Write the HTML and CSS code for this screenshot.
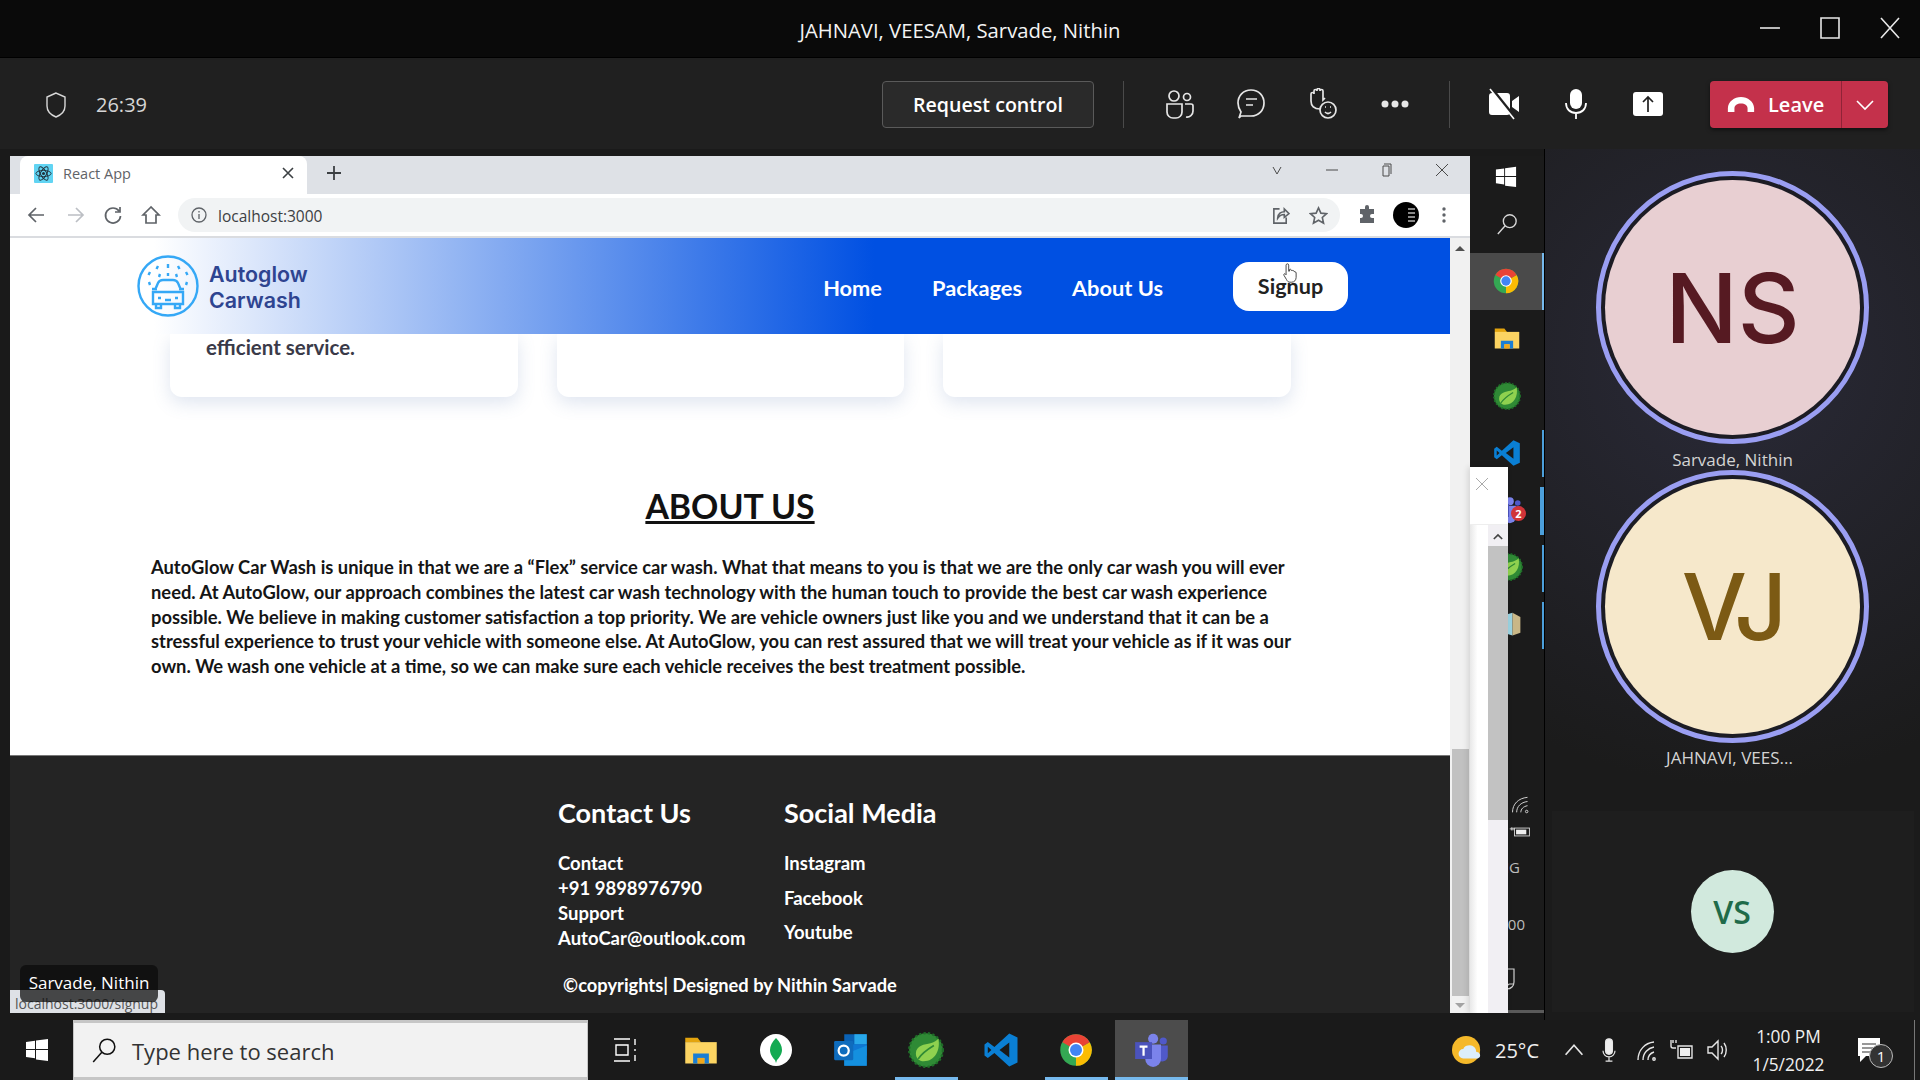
FILE: index.html
```html
<!DOCTYPE html>
<html lang="en">
<head>
<meta charset="utf-8">
<title>React App</title>
<link rel="stylesheet" href="styles.css">
</head>
<body>
<svg class="defs" width="0" height="0" aria-hidden="true">
  <defs>
    <symbol id="i-chrome" viewBox="0 0 48 48">
      <circle cx="24" cy="24" r="21" fill="#34a853"/>
      <path fill="#fbbc04" d="M24 24 42.2 13.5A21 21 0 0 1 24 45Z"/>
      <path fill="#ea4335" d="M24 24 5.8 13.5A21 21 0 0 1 42.2 13.5Z"/>
      <circle cx="24" cy="24" r="10" fill="#fff"/>
      <circle cx="24" cy="24" r="8" fill="#4285f4"/>
    </symbol>
    <symbol id="i-folder" viewBox="0 0 32 32">
      <path fill="#e3a40e" d="M2 5h11l3 4H2z"/>
      <path fill="#fcd462" d="M2 9h28v19H2z"/>
      <path fill="#1a7ed4" d="M9 28v-9h14v9h-4v-5h-6v5z"/>
      <path fill="#f0a81c" d="M13 23h6v5h-6z"/>
    </symbol>
    <symbol id="i-spring" viewBox="0 0 32 32">
      <circle cx="16" cy="16" r="15" fill="#2f8a35"/>
      <circle cx="16" cy="16" r="15" fill="none" stroke="#1f6d28" stroke-width="2" stroke-dasharray="2 2"/>
      <path fill="#8fd14f" d="M27 6c2 10-3 20-13 20-4 0-7-3-7-7 0-7 8-8 13-9 3-1 5-2 7-4z"/>
      <path fill="none" stroke="#2f8a35" stroke-width="1.5" d="M9 24c4-6 9-9 14-12"/>
    </symbol>
    <symbol id="i-vscode" viewBox="0 0 24 24">
      <path fill="#0a7fd4" d="M17.5 1 23 3.6v16.8L17.5 23 7.6 14 3.2 17.3 1 15.6V8.4l2.2-1.7L7.6 10z"/>
      <path fill="#1a1a1a" d="M17.5 7 11 12l6.5 5zM3.2 9.8v4.4L5.6 12z"/>
    </symbol>
    <symbol id="i-teams" viewBox="0 0 32 32">
      <circle cx="17" cy="6" r="4.5" fill="#7b83eb"/>
      <circle cx="26" cy="8" r="3.2" fill="#5059c9"/>
      <path fill="#5059c9" d="M21 12h9v10a5 5 0 0 1-9 2z"/>
      <path fill="#7b83eb" d="M10 11h14v13a7 7 0 0 1-14 0z"/>
      <path fill="#4b53bc" d="M1 9h15v15H1z"/>
      <path fill="#fff" d="M5 12h7v2H9.5v7h-2v-7H5z"/>
    </symbol>
    <symbol id="i-box" viewBox="0 0 32 32">
      <path fill="#9bd2e0" d="M3 8 20 3v26L3 24z"/>
      <path fill="#c9b787" d="M20 3l9 5v18l-9 3z"/>
    </symbol>
  </defs>
</svg>

<div class="app">
  <header class="titlebar">
    <span class="title">JAHNAVI, VEESAM, Sarvade, Nithin</span>
    <div class="wincontrols">
      <svg class="wc" viewBox="0 0 24 24"><path d="M2 12h20" /></svg>
      <svg class="wc" viewBox="0 0 24 24"><path d="M3 2h18v20H3z"/></svg>
      <svg class="wc" viewBox="0 0 24 24"><path d="M3 2l18 20M21 2 3 22"/></svg>
    </div>
  </header>

  <section class="meetbar">
    <svg class="shield" viewBox="0 0 24 28"><path d="M12 2 3 6v9c0 5 4 9 9 11 5-2 9-6 9-11V6z"/></svg>
    <span class="timer">26:39</span>
    <button class="reqbtn">Request control</button>
    <span class="vsep first"></span>
    <div class="slots first">
      <svg class="ico" viewBox="0 0 32 32"><circle cx="11" cy="8" r="5"/><circle cx="24" cy="9" r="3.5"/><path d="M4 16h15v8a6 6 0 0 1-6 6h-3a6 6 0 0 1-6-6zM22 16h6a2 2 0 0 1 2 2v5a6 6 0 0 1-7 6"/></svg>
      <svg class="ico" viewBox="0 0 32 32"><path d="M16 2c8 0 13 6 13 13s-5 13-13 13H6l-2 2 2-6c-2-3-3-6-3-9C3 8 8 2 16 2z"/><path d="M11 11h11M11 17h7"/></svg>
      <svg class="ico" viewBox="0 0 32 32"><path d="M13 21c-6 0-9-3-9-8V6c0-2 3-2 3 0V3c0-2 3-2 3 0V2c0-2 3-2 3 0v1c0-2 3-2 3 0v9l2-2"/><circle cx="21" cy="22" r="8"/><path d="M18 24c2 2 4 2 6 0"/><path d="M18 19h1M23 19h1"/></svg>
      <svg class="ico dots" viewBox="0 0 32 32"><circle cx="6" cy="16" r="3.5"/><circle cx="16" cy="16" r="3.5"/><circle cx="26" cy="16" r="3.5"/></svg>
    </div>
    <span class="vsep"></span>
    <div class="slots second">
      <svg class="ico solid" viewBox="0 0 32 32"><path d="M1 8a3 3 0 0 1 3-3h15a3 3 0 0 1 3 3v16a3 3 0 0 1-3 3H4a3 3 0 0 1-3-3zM24 13l7-5v16l-7-5z"/><path class="cut" d="M4 1l24 30"/><path class="slash" d="M2 1l24 30"/></svg>
      <svg class="ico solid" viewBox="0 0 32 32"><rect x="10" y="1" width="12" height="20" rx="6"/><path class="line" d="M6 15c0 6 4 10 10 10s10-4 10-10M16 25v6"/></svg>
      <svg class="ico solid" viewBox="0 0 32 32"><rect x="1" y="4" width="30" height="24" rx="3"/><path class="cutthin" d="M16 24V10M11 14l5-5 5 5"/></svg>
    </div>
    <div class="leave">
      <span class="leave-main">
        <svg class="hang" viewBox="0 0 32 20"><path d="M2 18v-4C2 7 9 2 16 2s14 5 14 12v4h-7v-4c0-3-3-5-7-5s-7 2-7 5v4z"/></svg>
        Leave
      </span>
      <span class="leave-more"><svg class="chev" viewBox="0 0 20 12"><path d="M2 2l8 8 8-8"/></svg></span>
    </div>
  </section>

  <main class="stage">
    <div class="screen">
      <div class="chrome">
        <div class="tabstrip">
          <div class="tab">
            <svg class="favicon" viewBox="0 0 20 20"><rect width="20" height="20" rx="1" fill="#61d4f3"/><g fill="none" stroke="#22323c" stroke-width="1"><ellipse cx="10" cy="10" rx="8" ry="3.2"/><ellipse cx="10" cy="10" rx="8" ry="3.2" transform="rotate(60 10 10)"/><ellipse cx="10" cy="10" rx="8" ry="3.2" transform="rotate(120 10 10)"/></g><circle cx="10" cy="10" r="1.6" fill="#22323c"/></svg>
            <span class="tabname">React App</span>
            <svg class="tabx" viewBox="0 0 12 12"><path d="M1 1l10 10M11 1 1 11"/></svg>
          </div>
          <svg class="newtab" viewBox="0 0 16 16"><path d="M8 1v14M1 8h14"/></svg>
          <div class="cwin">
            <svg class="cw" viewBox="0 0 14 14"><path d="M3 4l4 7 4-7"/></svg>
            <svg class="cw" viewBox="0 0 14 14"><path d="M1 7h12"/></svg>
            <svg class="cw" viewBox="0 0 14 14"><path d="M4 1h7v10M3 3h6v10H3z"/></svg>
            <svg class="cw" viewBox="0 0 14 14"><path d="M1 1l12 12M13 1 1 13"/></svg>
          </div>
        </div>
        <div class="toolbar">
          <svg class="tb" viewBox="0 0 20 20"><path d="M17 10H3M9 3l-7 7 7 7"/></svg>
          <svg class="tb dim" viewBox="0 0 20 20"><path d="M3 10h14M11 3l7 7-7 7"/></svg>
          <svg class="tb" viewBox="0 0 20 20"><path d="M16 6a7.5 7.5 0 1 0 1.5 5M17 2v5h-5"/></svg>
          <svg class="tb" viewBox="0 0 20 20"><path d="M10 2 2 10h3v8h10v-8h3z"/></svg>
          <div class="omni">
            <svg class="info" viewBox="0 0 16 16"><circle cx="8" cy="8" r="7"/><path d="M8 7v5M8 4v1.5"/></svg>
            <span class="url">localhost:3000</span>
            <svg class="tb share" viewBox="0 0 20 20"><path d="M9 3H3v15h13v-6M7 13c0-5 4-7 7-7V3l5 5-5 4V9c-3 0-5 1-7 4z"/></svg>
            <svg class="tb star" viewBox="0 0 20 20"><path d="M10 2l2.5 5.5 6 .6-4.5 4 1.3 6L10 15l-5.300 3.100 1.300-6-4.500-4 6-.6z"/></svg>
          </div>
          <svg class="puzzle" viewBox="0 0 20 20"><path d="M8 2a2 2 0 0 1 4 0v2h5v5h-2a2 2 0 0 0 0 4h2v5H3v-5h1a2 2 0 0 0 0-4H3V4h5z"/></svg>
          <span class="avatar-sm"><span class="avatar-sm-mark"></span></span>
          <svg class="kebab" viewBox="0 0 4 18"><circle cx="2" cy="3" r="1.700"/><circle cx="2" cy="9" r="1.700"/><circle cx="2" cy="15" r="1.700"/></svg>
        </div>
        <div class="viewport">
          <div class="page">
            <nav class="nav">
              <div class="brand">
                <svg class="brandicon" viewBox="0 0 64 64">
                  <circle cx="32" cy="32" r="29.500"/>
                  <path d="M22 12l-1.500 3M32 10v4M42 12l1.500 3M14 18l-1.500 3M50 18l1.500 3M24 20l-1 3M32 19v3M40 20l1 3M13 28l1 3M51 28l-1 3"/>
                  <path d="M19 36l3-7c1-2 3-3 5-3h10c2 0 4 1 5 3l3 7M16 35h5M43 35h5M17 38h30v12H17zM20 50v4h5v-4M39 50v4h5v-4M22 44h3M39 44h3M29 46h6"/>
                </svg>
                <span class="brandname">Autoglow<br>Carwash</span>
              </div>
              <ul class="links">
                <li><a class="link">Home</a></li>
                <li><a class="link">Packages</a></li>
                <li><a class="link">About Us</a></li>
              </ul>
              <a class="signup">Signup</a>
              <svg class="handcursor" viewBox="0 0 16 24"><path d="M5 1.500c1 0 1.500.7 1.500 1.500v7l1-.2V8c1-.6 2 0 2 1l1 .2c1-.5 2 0 2 1l1 .3c1 0 1.500.7 1.500 1.500v5c0 3-2 5.500-5 5.500H8c-2 0-3-1-4-3l-3-5c-.5-1 .5-2 1.500-1.500l1 1V3c0-.8.7-1.500 1.500-1.500z"/></svg>
            </nav>
            <div class="cards">
              <div class="card"><p class="cardtext">efficient service.</p></div>
              <div class="card"></div>
              <div class="card"></div>
            </div>
            <section class="about">
              <h1 class="about-title">ABOUT US</h1>
              <p class="about-text">AutoGlow Car Wash is unique in that we are a “Flex” service car wash. What that means to you is that we are the only car wash you will ever<br>need. At AutoGlow, our approach combines the latest car wash technology with the human touch to provide the best car wash experience<br>possible. We believe in making customer satisfaction a top priority. We are vehicle owners just like you and we understand that it can be a<br>stressful experience to trust your vehicle with someone else. At AutoGlow, you can rest assured that we will treat your vehicle as if it was our<br>own. We wash one vehicle at a time, so we can make sure each vehicle receives the best treatment possible.</p>
            </section>
            <footer class="footer">
              <div class="footcols">
                <div class="footcol">
                  <h2 class="foothead">Contact Us</h2>
                  <p class="contact">Contact<br>+91 9898976790<br>Support<br>AutoCar@outlook.com</p>
                </div>
                <div class="footcol">
                  <h2 class="foothead">Social Media</h2>
                  <ul class="social">
                    <li>Instagram</li>
                    <li>Facebook</li>
                    <li>Youtube</li>
                  </ul>
                </div>
              </div>
              <p class="copy">©copyrights| Designed by Nithin Sarvade</p>
            </footer>
          </div>
          <div class="scroll">
            <span class="arrow up"></span>
            <span class="thumb"></span>
            <span class="arrow down"></span>
          </div>
        </div>
      </div>
      <aside class="sidebar">
        <svg class="winlogo side" viewBox="0 0 24 24"><path d="M1 4l9-1.300V11H1zM11 2.500 23 1v10H11zM1 12h9v8.300L1 19zM11 12h12v11l-12-1.500z"/></svg>
        <svg class="sidesearch" viewBox="0 0 24 24"><circle cx="15" cy="9" r="7"/><path d="M10 14 2 23"/></svg>
        <div class="tile active"><svg class="sideicon"><use href="#i-chrome"/></svg></div>
        <div class="tile"><svg class="sideicon"><use href="#i-folder"/></svg></div>
        <div class="tile"><svg class="sideicon"><use href="#i-spring"/></svg></div>
        <div class="tile mark"><svg class="sideicon"><use href="#i-vscode"/></svg></div>
        <div class="tile mark wide shifted"><svg class="sideicon"><use href="#i-teams"/></svg><span class="badge">2</span></div>
        <div class="tile mark shifted"><svg class="sideicon"><use href="#i-spring"/></svg></div>
        <div class="tile mark shifted"><svg class="sideicon"><use href="#i-box"/></svg></div>
        <div class="sidetray">
          <svg class="st wifi" viewBox="0 0 24 24"><path d="M3 22C3 12 10 5 21 4M8 22c0-7 5-12 13-13M13 22c0-4 3-7 8-8"/><circle cx="20" cy="21" r="1.500"/></svg>
          <svg class="st batt" viewBox="0 0 28 14"><rect x="7" y="2" width="19" height="10"/><rect class="fill" x="9" y="4" width="13" height="6"/><path d="M1 3h6M3 1v4M5 1v4"/></svg>
          <span class="sttext g">NG</span>
          <span class="sttext o">00</span>
          <svg class="st note" viewBox="0 0 24 24"><path d="M2 2h14v13c0 4-3 7-7 7H2M9 22c0-3 1-5 3-5h4"/></svg>
          <span class="sideline"></span>
        </div>
      </aside>
    </div>

    <aside class="people">
      <div class="ring"><div class="disc ns">NS</div></div>
      <p class="pname">Sarvade, Nithin</p>
      <div class="ring"><div class="disc vj">VJ</div></div>
      <p class="pname trunc">JAHNAVI, VEES...</p>
      <div class="vsbox"><div class="vsdisc">VS</div></div>
    </aside>

    <div class="popup">
      <div class="popup-top"><svg class="popup-x" viewBox="0 0 14 14"><path d="M1 1l12 12M13 1 1 13"/></svg></div>
      <div class="popup-body">
        <div class="popup-bar">
          <svg class="popup-up" viewBox="0 0 12 8"><path d="M1 7l5-5 5 5"/></svg>
          <span class="popup-thumb"></span>
        </div>
      </div>
    </div>

    <div class="namelabel">Sarvade, Nithin</div>
    <div class="status">localhost:3000/signup</div>
  </main>

  <footer class="taskbar">
    <div class="startbtn"><svg class="winlogo" viewBox="0 0 24 24"><path d="M1 4l9-1.300V11H1zM11 2.500 23 1v10H11zM1 12h9v8.300L1 19zM11 12h12v11l-12-1.500z"/></svg></div>
    <div class="searchbox">
      <svg class="searchglass" viewBox="0 0 24 24"><circle cx="15" cy="9" r="7"/><path d="M10 14 2 23"/></svg>
      <span class="searchtext">Type here to search</span>
    </div>
    <div class="tk"><svg class="taskview" viewBox="0 0 26 26"><path d="M1 2h16M1 24h16M3 8h12v10H3zM22 2v6M22 12v2M22 18v6"/></svg></div>
    <div class="tk"><svg class="tkicon"><use href="#i-folder"/></svg></div>
    <div class="tk"><svg class="mongo" viewBox="0 0 32 32"><circle cx="16" cy="16" r="16" fill="#fff"/><path fill="#13aa52" d="M16 4c4 4 6 8 6 12s-3 8-5 10l-1 3-1-3c-2-2-5-6-5-10s2-8 6-12z"/></svg></div>
    <div class="tk"><svg class="tkicon" viewBox="0 0 32 32"><path fill="#0a62b5" d="M10 2h20v28H10z"/><path fill="#28a8ea" d="M19 2h11v9H19z"/><path fill="#0f78d4" d="M10 11h20v10H10z"/><path fill="#1490df" d="M10 20l20-8v18H10z"/><rect x="1" y="8" width="17" height="17" rx="1" fill="#0f6cbd"/><circle cx="9.500" cy="16.500" r="4.500" fill="none" stroke="#fff" stroke-width="2"/></svg></div>
    <div class="tk under"><svg class="tkicon"><use href="#i-spring"/></svg></div>
    <div class="tk"><svg class="tkicon"><use href="#i-vscode"/></svg></div>
    <div class="tk under"><svg class="tkicon"><use href="#i-chrome"/></svg></div>
    <div class="tk current"><svg class="tkicon teamsicon"><use href="#i-teams"/></svg></div>

    <div class="tray">
      <svg class="weather" viewBox="0 0 32 32"><circle cx="15" cy="16" r="15" fill="#f5b92a"/><path fill="#dceffb" d="M12 25a5 5 0 0 1 0-10c1-3 4-4 7-4a7 7 0 0 1 7 7c3 0 4 2 4 4s-2 3-4 3z"/></svg>
      <span class="temp">25°C</span>
      <div class="ts"><svg class="tsi" viewBox="0 0 20 20"><path d="M3 14l7-8 7 8"/></svg></div>
      <div class="ts"><svg class="tsi mic" viewBox="0 0 20 28"><rect x="6" y="1" width="8" height="18" rx="4"/><path class="thin" d="M3 15c0 4 3 7 7 7s7-3 7-7M10 22v5M6 27h8"/></svg></div>
      <div class="ts gapped"><svg class="tsi" viewBox="0 0 24 24"><path d="M3 22C3 12 10 5 19 4M8 22c0-7 5-12 11-13M13 22c0-4 3-7 6-8"/><circle cx="19" cy="21" r="1.200"/></svg></div>
      <div class="ts"><svg class="tsi" viewBox="0 0 24 24"><path d="M8 8h14v12H8zM1 2v6a2 2 0 0 0 2 2h3M3 2v3M6 2v3"/><path class="bfill" d="M10 10h10v8H10z"/></svg></div>
      <div class="ts"><svg class="tsi" viewBox="0 0 24 24"><path d="M3 9v6h4l6 6V3L7 9zM16 8c2 2 2 6 0 8M19 5c3 4 3 10 0 14"/></svg></div>
      <div class="clock"><span>1:00 PM</span><span>1/5/2022</span></div>
      <div class="notif">
        <svg class="notifi" viewBox="0 0 24 28"><path d="M1 2h22v18H9l-6 6v-6H1z"/><path class="nl" d="M5 8h14M5 12h14M5 16h10"/></svg>
        <span class="notifn">1</span>
      </div>
      <span class="peek"></span>
    </div>
  </footer>
</div>
</body>
</html>
```

FILE: styles.css
```css
* { box-sizing: border-box; }
html, body { margin: 0; padding: 0; }
body { width: 1920px; height: 1080px; overflow: hidden; background: #141414; font-family: "Open Sans", "Noto Sans", sans-serif; color: #fff; }
p, h1, h2, ul { margin: 0; padding: 0; }
ul { list-style: none; }
.defs { position: absolute; }
.app { width: 1920px; height: 1080px; display: flex; flex-direction: column; }

/* title bar */
.titlebar { height: 58px; background: #0a0a0a; display: flex; align-items: center; justify-content: center; position: relative; border-bottom: 1px solid #000; }
.title { font-size: 20.3px; color: #f4f4f4; margin-top: 2px; }
.wincontrols { position: absolute; right: 18px; top: 16px; display: flex; gap: 36px; }
.wc { width: 24px; height: 24px; fill: none; stroke: #e8e8e8; stroke-width: 1.6; }

/* meeting bar */
.meetbar { height: 91px; background: #202020; display: flex; align-items: center; padding: 2px 32px 0 44px; }
.shield { width: 24px; height: 30px; fill: none; stroke: #d8d8d8; stroke-width: 1.4; }
.timer { font-size: 20px; color: #d6d6d6; margin-left: 28px; width: 50px; white-space: nowrap; }
.reqbtn { margin-left: 736px; width: 212px; height: 47px; background: #2a2a2a; border: 1px solid #5a5a5a; border-radius: 4px; color: #fff; font: 600 19.6px "Open Sans", sans-serif; padding: 0; }
.vsep { width: 1px; height: 47px; background: #4a4a4a; margin-left: 18px; }
.vsep.first { margin-left: 29px; }
.slots { display: flex; }
.slots.first { margin-left: 19px; }
.slots.second { margin-left: 18px; }
.ico { width: 32px; height: 32px; margin: -2px 20px 0; fill: none; stroke: #e6e6e6; stroke-width: 1.7; }
.ico.dots { fill: #e6e6e6; stroke: none; }
.ico.solid { fill: #fff; stroke: none; }
.ico .cut { stroke: #202020; stroke-width: 3; }
.ico .slash { stroke: #fff; stroke-width: 1.6; fill: none; }
.ico .line { fill: none; stroke: #fff; stroke-width: 1.8; }
.ico .cutthin { fill: none; stroke: #202020; stroke-width: 1.7; }
.leave { margin-left: 26px; width: 178px; height: 47px; background: #c4314b; border-radius: 4px; display: flex; box-shadow: 0 2px 4px rgba(0,0,0,.5); }
.leave-main { width: 131px; display: flex; align-items: center; gap: 12px; padding-left: 16px; font-size: 20px; font-weight: 600; }
.hang { width: 30px; height: 19px; fill: #fff; }
.leave-more { width: 47px; border-left: 1px solid #8f2337; display: flex; align-items: center; justify-content: center; }
.chev { width: 20px; height: 12px; fill: none; stroke: #fff; stroke-width: 1.6; }

/* stage */
.stage { position: relative; height: 871px; display: flex; background: #141414; }
.screen { width: 1544px; display: flex; padding: 7px 0 7px 10px; background: #1a1a1a; }
.chrome { width: 1460px; height: 857px; display: flex; flex-direction: column; background: #fff; }
.tabstrip { height: 38px; background: #dee1e6; display: flex; align-items: flex-end; padding-left: 10px; }
.tab { width: 287px; height: 38px; background: #fff; border-radius: 8px 8px 0 0; display: flex; align-items: center; padding: 0 13px 4px 14px; }
.favicon { width: 19px; height: 19px; }
.tabname { margin-left: 10px; font-size: 14.5px; color: #5f6368; flex: 1; font-family: "Open Sans", sans-serif; }
.tabx { width: 12px; height: 12px; stroke: #3c4043; stroke-width: 1.6; }
.newtab { width: 16px; height: 16px; stroke: #3c4043; stroke-width: 1.8; margin: 0 0 13px 19px; }
.cwin { margin-left: auto; display: flex; gap: 41px; align-self: flex-start; padding: 7px 21px 0 0; }
.cw { width: 14px; height: 14px; fill: none; stroke: #4a4a4a; stroke-width: 1; }
.toolbar { height: 44px; background: #fff; border-bottom: 2px solid #dadce0; display: flex; align-items: center; padding: 0 0 0 17px; }
.tb { width: 20px; height: 20px; fill: none; stroke: #5f6368; stroke-width: 1.7; margin-right: 18px; }
.tb.dim { stroke: #bcbfc4; }
.omni { width: 1162px; height: 34px; margin-left: -1px; background: #f1f3f4; border-radius: 17px; display: flex; align-items: center; padding-left: 13px; }
.info { width: 16px; height: 16px; fill: none; stroke: #5f6368; stroke-width: 1.3; }
.url { font-size: 15.5px; color: #3c4043; margin: 1px 0 0 11px; flex: 1; }
.tb.share { width: 19px; height: 19px; margin-right: 19px; }
.tb.star { width: 19px; height: 19px; margin-right: 12px; }
.puzzle { width: 20px; height: 20px; fill: #5f6368; margin-left: 17px; }
.avatar-sm { width: 26px; height: 26px; border-radius: 50%; background: #000; margin-left: 16px; display: flex; align-items: center; justify-content: flex-end; padding-right: 4px; }
.avatar-sm-mark { width: 7px; height: 14px; background: repeating-linear-gradient(0deg, #888 0 2px, #000 2px 4px); }
.kebab { width: 4px; height: 18px; fill: #5f6368; margin-left: 23px; }

/* page */
.viewport { height: 775px; display: flex; }
.page { width: 1440px; display: flex; flex-direction: column; background: #fff; font-family: "Lato", "Noto Sans", sans-serif; }
.nav { height: 96px; position: relative; display: flex; align-items: center; background: linear-gradient(to right, #fff 10%, #0050e2 60%); padding-left: 126px; flex: none; }
.brand { display: flex; align-items: center; gap: 9px; }
.brandicon { width: 64px; height: 64px; fill: none; stroke: #35a8f6; stroke-width: 2.4; }
.brandname { font-family: "Inter", "Noto Sans", sans-serif; font-size: 21.4px; font-weight: 600; line-height: 26px; color: #2e4490; margin-top: 2px; }
.links { display: flex; gap: 50px; margin: 2px 0 0 auto; }
.link { font-size: 21.8px; font-weight: 700; color: #fff; }
.signup { margin: 0 102px 0 70px; width: 115px; height: 49px; background: #fff; border-radius: 16px; display: flex; align-items: center; justify-content: center; font-size: 21.6px; font-weight: 700; color: #222; }
.handcursor { position: absolute; left: 1273px; top: 24px; width: 14px; height: 22px; fill: #fff; stroke: #333; stroke-width: 1; }

.cards { height: 63px; display: flex; gap: 39px; padding-left: 160px; flex: none; }
.card { width: 347.5px; height: 63px; background: #fff; border-radius: 0 0 12px 12px; box-shadow: 0 6px 18px rgba(80,110,170,.18); }
.cardtext { padding-left: 36px; font-size: 20.5px; font-weight: 700; line-height: 26px; color: #3a3a48; }

.about { flex: 1; }
.about-title { margin-top: 87px; text-align: center; font-size: 33.8px; font-weight: 700; line-height: 44px; color: #111; text-decoration: underline; }
.about-text { margin-top: 27px; padding-left: 141px; font-size: 18.35px; font-weight: 700; line-height: 24.8px; color: #151515; white-space: nowrap; }

.footer { height: 258px; flex: none; background: #242424; border-top: 1px solid #777; padding-top: 39px; }
.footcols { display: flex; padding-left: 548px; }
.footcol { width: 226px; }
.foothead { font-size: 27px; font-weight: 700; line-height: 36px; color: #fff; }
.contact { margin-top: 20px; font-size: 18.5px; font-weight: 700; line-height: 25px; color: #fff; white-space: nowrap; }
.social { margin-top: 20px; font-size: 18.5px; font-weight: 700; line-height: 25px; display: flex; flex-direction: column; gap: 9.5px; }
.copy { margin-top: 21px; text-align: center; font-size: 18.3px; font-weight: 700; line-height: 26px; color: #fff; }

.scroll { width: 20px; background: #f1f1f1; position: relative; display: flex; flex-direction: column; align-items: center; }
.arrow { width: 0; height: 0; border-left: 5px solid transparent; border-right: 5px solid transparent; }
.arrow.up { border-bottom: 5px solid #505050; margin-top: 8px; }
.arrow.down { border-top: 5px solid #a3a3a3; margin-top: 7px; }
.thumb { width: 17px; height: 247px; background: #c1c1c1; margin-top: 498px; }

/* taskbar-like sidebar inside shared screen */
.sidebar { width: 74px; display: flex; flex-direction: column; align-items: stretch; background: #1b1b1b; }
.winlogo { width: 24px; height: 24px; fill: #fff; }
.winlogo.side { margin: 9px 0 7px 25px; width: 22px; height: 24px; }
.sidesearch { width: 22px; height: 28px; margin: 14px 0 15px 26px; fill: none; stroke: #d8d8d8; stroke-width: 1.5; }
.tile { height: 57.200px; display: flex; align-items: center; justify-content: center; position: relative; flex: none; }
.tile.active { background: #4a4a4a; border-right: 2px solid #76b9ed; }
.tile.mark::after { content: ""; position: absolute; right: 0; top: 6px; bottom: 4px; width: 2px; background: #4c9fdb; }
.tile.wide::after { width: 4px; }
.tile.shifted { justify-content: flex-start; padding-left: 25px; }
.sideicon { width: 28px; height: 28px; }
.badge { position: absolute; left: 41px; top: 25px; width: 15px; height: 15px; border-radius: 50%; background: #d13438; font-size: 11px; font-weight: 700; text-align: center; line-height: 15px; }
.sidetray { margin-top: 137px; display: flex; flex-direction: column; flex: 1; }
.st { fill: none; stroke: #cfcfcf; stroke-width: 1.2; flex: none; }
.st.wifi { width: 20px; height: 20px; margin: 4px 0 5px 40px; }
.st.batt { width: 22px; height: 14px; margin: 6px 0 5px 39px; }
.st .fill { fill: #eee; stroke: none; }
.sttext { font-size: 15px; color: #bdbdbd; text-align: right; padding-right: 22px; height: 25px; line-height: 25px; flex: none; }
.sttext.g { margin-top: 11px; padding-right: 24px; }
.sttext.o { margin-top: 32px; padding-right: 19px; }
.st.note { width: 24px; height: 24px; margin: 30px 0 0 28px; }
.sideline { margin-top: 19px; height: 3px; background: #5a5a5a; }

/* participants */
.people { width: 376px; background: #1b1b1b radial-gradient(circle at 50% 24%, #2a2a38 0%, #1b1b1b 62%); border-left: 1px solid #000; display: flex; flex-direction: column; align-items: center; padding-top: 22px; }
.ring { width: 273px; height: 273px; border-radius: 50%; border: 5px solid #9a9ef2; background: #1c1c24; padding: 4px; flex: none; }
.disc { width: 100%; height: 100%; border-radius: 50%; display: flex; align-items: center; justify-content: center; font-family: "Inter", "Open Sans", sans-serif; font-size: 96px; font-weight: 500; letter-spacing: 0; }
.disc.ns { background: #e8cfd2; color: #561a22; }
.disc.vj { background: #f6e8cb; color: #7c5a14; font-size: 92px; letter-spacing: -4px; }
.pname { margin-top: 4px; height: 22px; font-size: 17px; line-height: 24px; color: #d4d4d4; flex: none; }
.pname.trunc { margin: 3px 6px 0 0; }
.vsbox { margin-top: 43px; width: 362px; height: 201px; background: #1e1e1e; display: flex; align-items: center; justify-content: center; flex: none; }
.vsdisc { width: 83px; height: 83px; margin-right: 1px; border-radius: 50%; background: #d1e9dd; color: #1f6b4a; font-size: 32px; font-weight: 600; display: flex; align-items: center; justify-content: center; }

/* overlays */
.popup { position: absolute; left: 1470px; top: 318px; width: 38px; height: 546px; background: #fff; display: flex; flex-direction: column; box-shadow: -2px 0 6px rgba(0,0,0,.12); }
.popup-top { height: 58px; border-bottom: 1px solid #eee; padding: 10px 0 0 5px; }
.popup-x { width: 14px; height: 14px; fill: none; stroke: #aaa; stroke-width: 1; display: block; }
.popup-body { flex: 1; display: flex; justify-content: flex-end; background: linear-gradient(to right, #e8e8e8, #fff 20%); }
.popup-bar { width: 20px; background: #f1eff3; display: flex; flex-direction: column; align-items: center; }
.popup-up { width: 10px; height: 7px; fill: none; stroke: #444; stroke-width: 2; margin: 8px 0 6px; }
.popup-thumb { width: 20px; height: 274px; background: #c2c2c2; }
.namelabel { position: absolute; left: 20px; top: 816px; width: 138px; height: 37px; background: rgba(10,10,10,.72); border-radius: 6px; font-size: 17px; line-height: 36px; text-align: center; color: #fff; z-index: 2; }
.status { position: absolute; left: 10px; top: 841px; width: 155px; height: 23px; background: #dee1e6; border-radius: 0 4px 0 0; font-size: 14px; line-height: 27px; color: #555; padding-left: 5px; white-space: nowrap; overflow: hidden; }

/* windows taskbar */
.taskbar { height: 60px; background: #1a1a1a; display: flex; align-items: stretch; }
.startbtn { width: 73px; display: flex; align-items: center; justify-content: center; }
.searchbox { width: 515px; background: #f2f2f2; border-top: 3px solid #c6c6c6; border-bottom: 3px solid #c6c6c6; border-left: 1px solid #c6c6c6; border-right: 1px solid #c6c6c6; display: flex; align-items: center; padding-left: 17px; }
.searchglass { width: 26px; height: 26px; fill: none; stroke: #111; stroke-width: 1.4; }
.searchtext { margin: 2px 0 0 15px; font-size: 22px; color: #333; }
.tk { width: 75px; display: flex; align-items: center; justify-content: center; position: relative; }
.tk.under::after { content: ""; position: absolute; left: 7px; right: 5px; bottom: 0; height: 3px; background: #76b9ed; }
.tk.current { background: #4c4c4c; border-bottom: 3px solid #76b9ed; margin-left: 2px; width: 73px; }
.tkicon { width: 36px; height: 36px; }
.teamsicon { margin-top: 3px; }
.mongo { width: 32px; height: 32px; }
.taskview { width: 26px; height: 26px; fill: none; stroke: #fff; stroke-width: 1.4; }
.tray { margin-left: auto; width: 475px; display: flex; align-items: center; position: relative; padding-left: 7px; }
.weather { width: 30px; height: 34px; flex: none; }
.temp { font-size: 20px; margin-left: 13px; width: 61px; color: #f0f0f0; flex: none; }
.ts { width: 35px; display: flex; justify-content: center; flex: none; }
.ts.gapped { margin-left: 3px; }
.tsi { width: 24px; height: 24px; fill: none; stroke: #e6e6e6; stroke-width: 1.4; }
.tsi.mic { fill: #eee; }
.tsi .thin { fill: none; }
.tsi .bfill { fill: #eee; stroke: none; }
.clock { width: 105px; margin-left: 2px; flex: none; display: flex; flex-direction: column; align-items: center; gap: 5px; font-size: 17.3px; line-height: 23px; color: #f0f0f0; }
.notif { width: 60px; margin-left: -2px; position: relative; flex: none; display: flex; justify-content: center; }
.notifi { width: 24px; height: 28px; fill: #fff; }
.notifi .nl { stroke: #333; stroke-width: 1.2; fill: none; }
.notifn { position: absolute; left: 30px; top: 8px; width: 24px; height: 24px; border-radius: 50%; border: 1px solid #bbb; background: #333; font-size: 15px; line-height: 22px; text-align: center; }
.peek { position: absolute; right: 5px; top: 0; width: 1px; height: 60px; background: #777; }
```
